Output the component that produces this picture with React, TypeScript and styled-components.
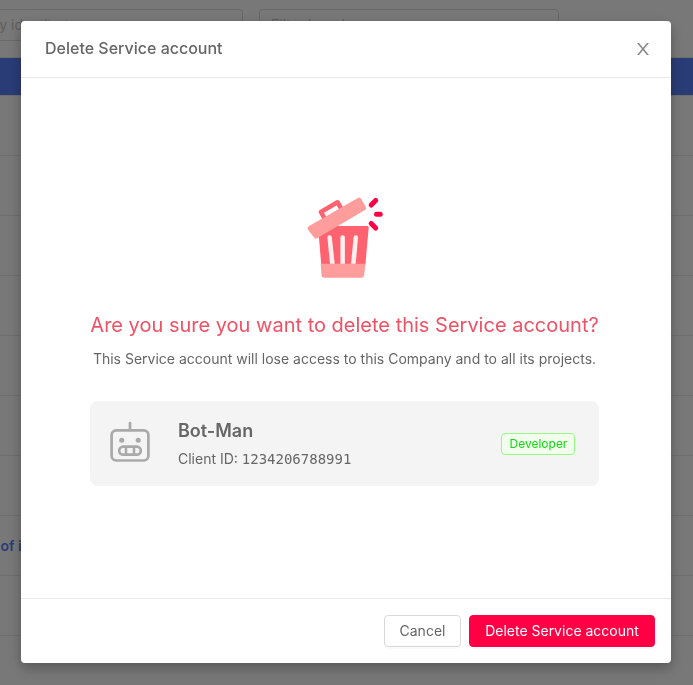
import React from "react";
import styled, { createGlobalStyle } from "styled-components";

const GlobalStyle = createGlobalStyle`
  *, *::before, *::after { box-sizing: border-box; }
  html, body { margin: 0; height: 100%; overflow: hidden; }
  body { font-family: Inter, sans-serif; font-size: 14px; color: #666; background: #f0f0f0; }
  h1, h2, h3, p { margin: 0; font-weight: 400; }
  button { font: inherit; cursor: pointer; }
`;

const Page = styled.main`
  width: 100%;
  height: 685px;
  overflow: hidden;
`;

const Filters = styled.div`
  display: flex;
  gap: 16px;
  height: 57px;
  padding-top: 9px;
`;

const FilterBox = styled.div<{ $width: number; $open?: boolean }>`
  width: ${(p) => p.$width}px;
  height: 32px;
  border: 1px solid #d0d0d0;
  border-left-width: ${(p) => (p.$open ? 0 : 1)}px;
  border-radius: ${(p) => (p.$open ? "0 4px 4px 0" : "4px")};
  padding-left: ${(p) => (p.$open ? 0 : 11)}px;
  text-indent: ${(p) => (p.$open ? -9 : 0)}px;
  line-height: 30px;
  color: #bdbdbd;
  white-space: nowrap;
`;

const TableHead = styled.div`
  height: 39px;
  background: #5479ec;
  border: solid #dcdcdc;
  border-width: 1px 0;
`;

const TableRow = styled.div`
  height: 60px;
  padding-left: 0.5px;
  border-bottom: 1px solid #dcdcdc;
  line-height: 60px;
  font-weight: 600;
  color: #5479ec;
`;

const Mask = styled.div`
  position: fixed;
  inset: 0;
  padding: 21px;
  background: rgba(0, 0, 0, 0.5);
`;

const Dialog = styled.section`
  display: flex;
  flex-direction: column;
  width: 650px;
  height: 642px;
  border-radius: 4px;
  background: #fff;
  box-shadow: 0 4px 12px rgba(0, 0, 0, 0.15), 0 6px 16px rgba(0, 0, 0, 0.16);
`;

const Header = styled.header`
  display: flex;
  align-items: center;
  justify-content: space-between;
  height: 57px;
  padding: 0 22px 2px 24px;
  border-bottom: 1px solid #e8e8e8;
`;

const Title = styled.h1`
  font-size: 16px;
  line-height: 22px;
  font-weight: 500;
`;

const CloseButton = styled.button`
  display: flex;
  padding: 0;
  border: 0;
  background: none;
  color: #888;
  margin-top: 2px;
`;

const Body = styled.div`
  flex: 1;
  display: flex;
  flex-direction: column;
  align-items: center;
  padding: 118px 3px 0 0;
`;

const Question = styled.h2`
  margin-top: 31px;
  font-size: 20px;
  line-height: 28px;
  color: #ee5266;
  white-space: nowrap;
`;

const Note = styled.p`
  margin-top: 9px;
  line-height: 22px;
  white-space: nowrap;
`;

const AccountCard = styled.div`
  display: flex;
  align-items: center;
  width: 509px;
  height: 85px;
  margin-top: 31px;
  padding: 0 24px 0 20px;
  border-radius: 8px;
  background: #f4f4f4;
`;

const AccountInfo = styled.div`
  flex: 1;
  margin-left: 28px;
`;

const AccountName = styled.h3`
  font-size: 18px;
  line-height: 28px;
  font-weight: 600;
`;

const ClientId = styled.p`
  margin-top: 2px;
  line-height: 24px;
`;

const Code = styled.span`
  font-family: "DejaVu Sans Mono", monospace;
  font-size: 14px;
`;

const RoleTag = styled.span`
  width: 74px;
  height: 22px;
  padding-left: 7.5px;
  border: 1px solid #95f985;
  border-radius: 4px;
  background: #f3ffed;
  color: #12d812;
  font-size: 12px;
  line-height: 20px;
`;

const Footer = styled.footer`
  display: flex;
  justify-content: flex-end;
  gap: 8px;
  height: 65px;
  padding: 16px;
  border-top: 1px solid #e8e8e8;
`;

const Button = styled.button<{ $danger?: boolean }>`
  width: ${(p) => (p.$danger ? 186 : 77)}px;
  height: 32px;
  padding: 0;
  border: 1px solid ${(p) => (p.$danger ? "#ff0044" : "#d9d9d9")};
  border-radius: 4px;
  background: ${(p) => (p.$danger ? "#ff0044" : "#fff")};
  color: ${(p) => (p.$danger ? "#fff" : "#666")};
  line-height: 30px;
  white-space: nowrap;
  box-shadow: 0 2px 0 rgba(0, 0, 0, 0.02);
`;

const TrashArt = () => (
  <svg width="77" height="84" viewBox="-1.200 0 77 84" fill="none">
    <path d="M10.800 30H60a1.500 1.500 0 0 1 1.500 1.600L58.200 68.500H14Z" fill="#ff6370" />
    <path d="M13.500 67.700H58.300L56.900 79.200q-.3 2.500-2.800 2.500H17.100q-2.500 0-2.800-2.500Z" fill="#ff9c9c" />
    <path d="M20.200 41.600a2.200 2.200 0 0 1 4.400-.3L27.500 67.700H22.800Z" fill="#ffefef" />
    <path d="M33.200 41.500a2.250 2.250 0 0 1 4.500 0V67.700H33.200Z" fill="#ffefef" />
    <path d="M46.400 41.300a2.200 2.200 0 0 1 4.400.3L48.500 67.700H43.800Z" fill="#ffefef" />
    <path
      d="M18.500 24.500 13.700 15.900 30.300 6.300 35.500 15"
      stroke="#ff6370"
      strokeWidth="4.600"
      strokeLinejoin="round"
    />
    <path
      d="M1.500 30.300 50.700 1.900q2-1.100 3.200.9l4.700 8.100q1.100 2-.9 3.200L9.900 42.200q-2 1.100-3.200-.9L.6 33.500q-1.100-2 .9-3.200Z"
      fill="#ff9c9c"
    />
    <g stroke="#ff0044" strokeWidth="5" strokeLinecap="round">
      <path d="M64 9 68.500 4.500" />
      <path d="M69.300 18.300H73" />
      <path d="M64 27.500 68.500 32" />
    </g>
  </svg>
);

const RobotIcon = () => (
  <svg width="40" height="45" viewBox="0 0 40 45" fill="none" stroke="#a9a9a9">
    <path d="M20 2.200V9" strokeWidth="2.700" strokeLinecap="round" />
    <rect x="1.600" y="9.300" width="36.800" height="30.200" rx="4.700" strokeWidth="2.700" />
    <circle cx="11.700" cy="19.200" r="2.500" fill="#a9a9a9" stroke="none" />
    <circle cx="28.200" cy="19.200" r="2.500" fill="#a9a9a9" stroke="none" />
    <rect x="9.200" y="25.700" width="21.600" height="8" rx="4" strokeWidth="2.700" />
    <path d="M16 26V33M24 26V33" strokeWidth="2.500" />
  </svg>
);

const CloseIcon = () => (
  <svg width="12" height="12" viewBox="0 0 12 12" fill="currentColor">
    <path d="M0 0H2.100L6 4.800 9.900 0H12L7 6 12 12H9.900L6 7.200 2.100 12H0L5 6Z" />
  </svg>
);

const rows = ["", "", "", "", "", "", "", "of identity", "", ""];

export default function App() {
  return (
    <>
      <GlobalStyle />
      <Page>
        <Filters>
          <FilterBox $width={243} $open>by identity type</FilterBox>
          <FilterBox $width={300}>Filter by role</FilterBox>
        </Filters>
        <TableHead />
        {rows.map((text, i) => (
          <TableRow key={i}>{text}</TableRow>
        ))}
      </Page>
      <Mask>
        <Dialog role="dialog" aria-modal="true">
          <Header>
            <Title>Delete Service account</Title>
            <CloseButton aria-label="Close">
              <CloseIcon />
            </CloseButton>
          </Header>
          <Body>
            <TrashArt />
            <Question>Are you sure you want to delete this Service account?</Question>
            <Note>This Service account will lose access to this Company and to all its projects.</Note>
            <AccountCard>
              <RobotIcon />
              <AccountInfo>
                <AccountName>Bot-Man</AccountName>
                <ClientId>
                  Client ID: <Code>1234206788991</Code>
                </ClientId>
              </AccountInfo>
              <RoleTag>Developer</RoleTag>
            </AccountCard>
          </Body>
          <Footer>
            <Button>Cancel</Button>
            <Button $danger>Delete Service account</Button>
          </Footer>
        </Dialog>
      </Mask>
    </>
  );
}
